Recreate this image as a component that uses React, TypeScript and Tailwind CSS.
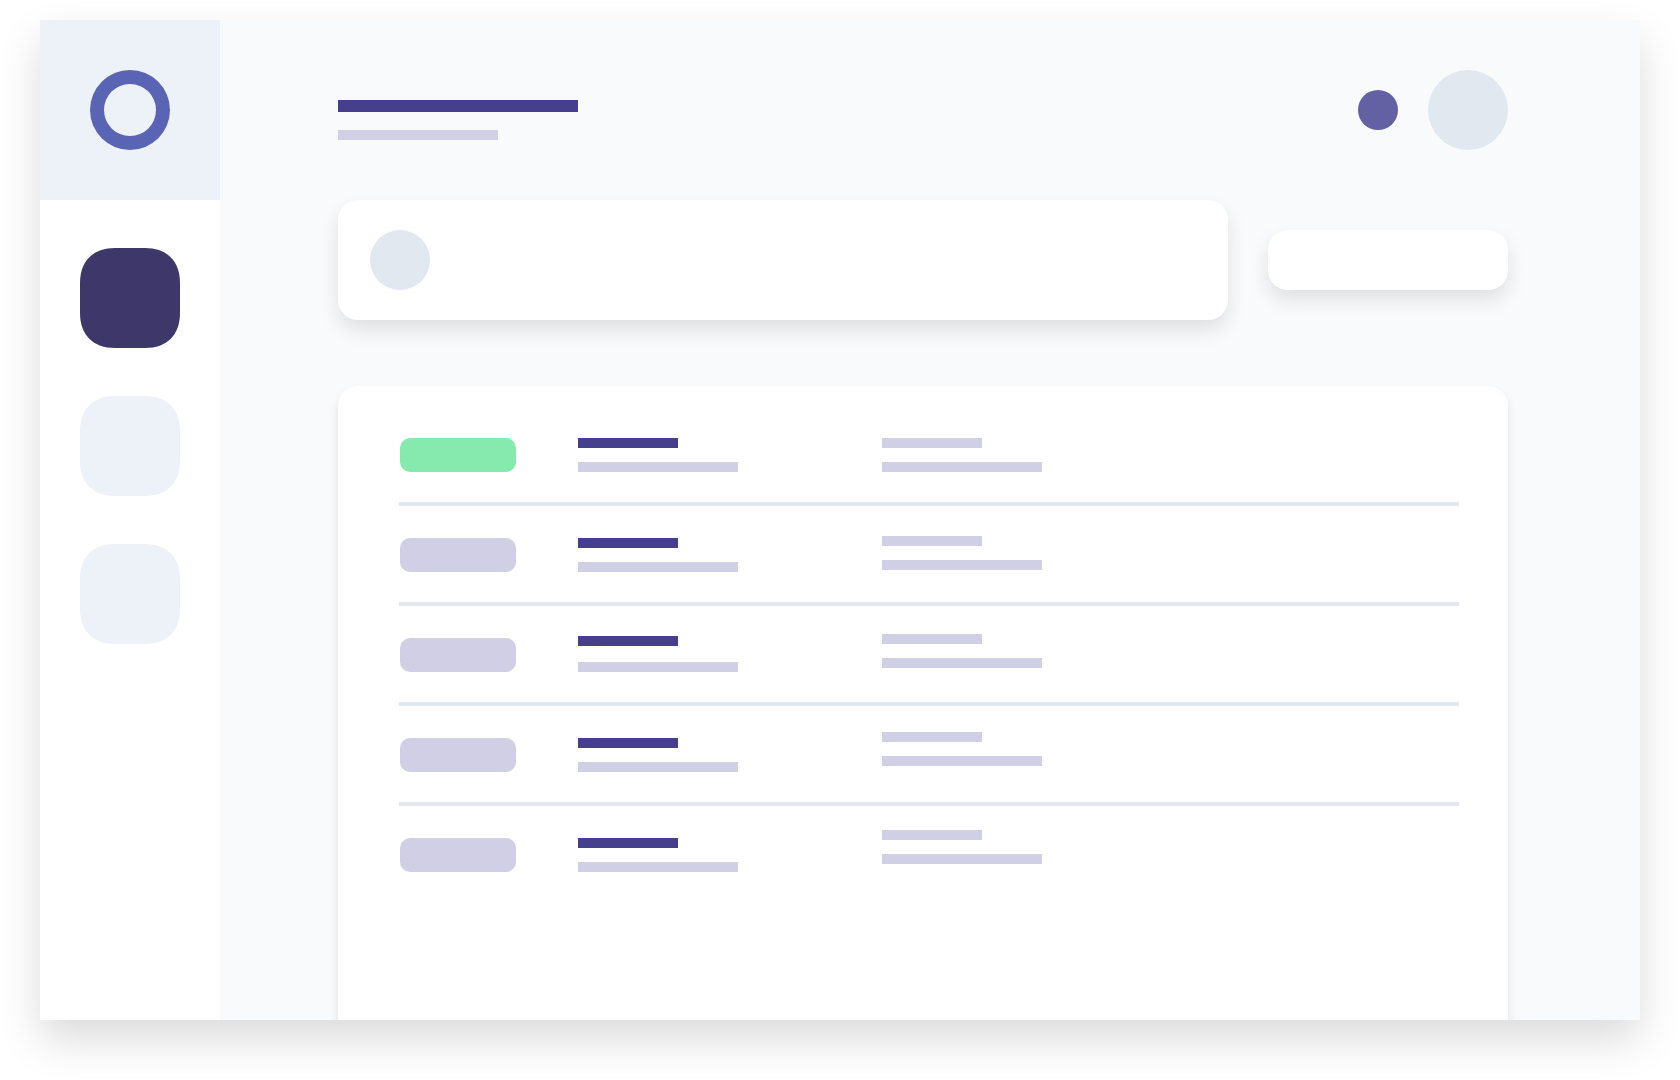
const rows = [
  { pill: "bg-[#86eaae]", title: "mt-0", titleGap: "mt-[14px]", side: "mt-0" },
  { pill: "bg-[#d1cfe6]", title: "mt-0", titleGap: "mt-[14px]", side: "-mt-[2px]" },
  { pill: "bg-[#d1cfe6]", title: "-mt-[2px]", titleGap: "mt-[16px]", side: "-mt-[4px]" },
  { pill: "bg-[#d1cfe6]", title: "mt-0", titleGap: "mt-[14px]", side: "-mt-[6px]" },
  { pill: "bg-[#d1cfe6]", title: "mt-0", titleGap: "mt-[14px]", side: "-mt-[8px]" },
];

function Tile({ fill }: { fill: string }) {
  return (
    <svg width="100" height="100" viewBox="0 0 100 100" className="block">
      <path
        d="M35 0 H65 C87 0 100 13 100 35 V65 C100 87 87 100 65 100 H35 C13 100 0 87 0 65 V35 C0 13 13 0 35 0 Z"
        fill={fill}
      />
    </svg>
  );
}

function Row({ row, last }: { row: (typeof rows)[number]; last: boolean }) {
  return (
    <div>
      <div className="flex h-[64px] items-start pl-[1px]">
        <div className={`h-[34px] w-[116px] rounded-[10px] ${row.pill}`} />
        <div className={`ml-[62px] w-[304px] ${row.title}`}>
          <div className="h-[10px] w-[100px] bg-[#46408c]" />
          <div className={`h-[10px] w-[160px] bg-[#d1cfe6] ${row.titleGap}`} />
        </div>
        <div className={row.side}>
          <div className="h-[10px] w-[100px] bg-[#d1cfe6]" />
          <div className="mt-[14px] h-[10px] w-[160px] bg-[#d1cfe6]" />
        </div>
      </div>
      {!last && <div className="mb-[32px] h-[4px] bg-[#e2e8f0]" />}
    </div>
  );
}

export default function App() {
  return (
    <div className="h-[1080px] w-[1680px] overflow-hidden bg-white pl-[40px] pt-[20px]">
      <div className="flex h-[1000px] w-[1600px] overflow-hidden bg-[#f9fafc] shadow-[0_20px_40px_rgba(0,0,0,0.14)]">
        <aside className="flex w-[180px] shrink-0 flex-col items-center bg-white">
          <div className="flex h-[180px] w-full items-center justify-center bg-[#edf2f9]">
            <div className="flex h-[80px] w-[80px] items-center justify-center rounded-full bg-[#5a64b5]">
              <div className="h-[52px] w-[52px] rounded-full bg-[#edf2f9]" />
            </div>
          </div>
          <div className="mt-[48px] flex flex-col gap-[48px]">
            <Tile fill="#3e3769" />
            <Tile fill="#edf2f9" />
            <Tile fill="#edf2f9" />
          </div>
        </aside>
        <main className="min-w-0 flex-1 pl-[118px] pr-[132px] pt-[50px]">
          <header className="flex h-[80px] items-start">
            <div className="mt-[30px]">
              <div className="h-[12px] w-[240px] bg-[#46408c]" />
              <div className="mt-[18px] h-[10px] w-[160px] bg-[#d1cfe6]" />
            </div>
            <div className="ml-auto flex items-center gap-[30px]">
              <div className="h-[40px] w-[40px] rounded-full bg-[#6361a4]" />
              <div className="h-[80px] w-[80px] rounded-full bg-[#e2e8f0]" />
            </div>
          </header>
          <section className="mt-[50px] flex items-center gap-[40px]">
            <div className="flex h-[120px] w-[890px] items-center rounded-[20px] bg-white pl-[32px] shadow-[0_10px_20px_rgba(0,0,0,0.1)]">
              <div className="h-[60px] w-[60px] rounded-full bg-[#e2e8f0]" />
            </div>
            <div className="h-[60px] w-[240px] rounded-[20px] bg-white shadow-[0_10px_20px_rgba(0,0,0,0.1)]" />
          </section>
          <section className="mt-[66px] h-[700px] rounded-[20px] bg-white pl-[61px] pr-[49px] pt-[52px] shadow-[0_6px_10px_rgba(0,0,0,0.1)]">
            {rows.map((row, i) => (
              <Row key={i} row={row} last={i === rows.length - 1} />
            ))}
          </section>
        </main>
      </div>
    </div>
  );
}
